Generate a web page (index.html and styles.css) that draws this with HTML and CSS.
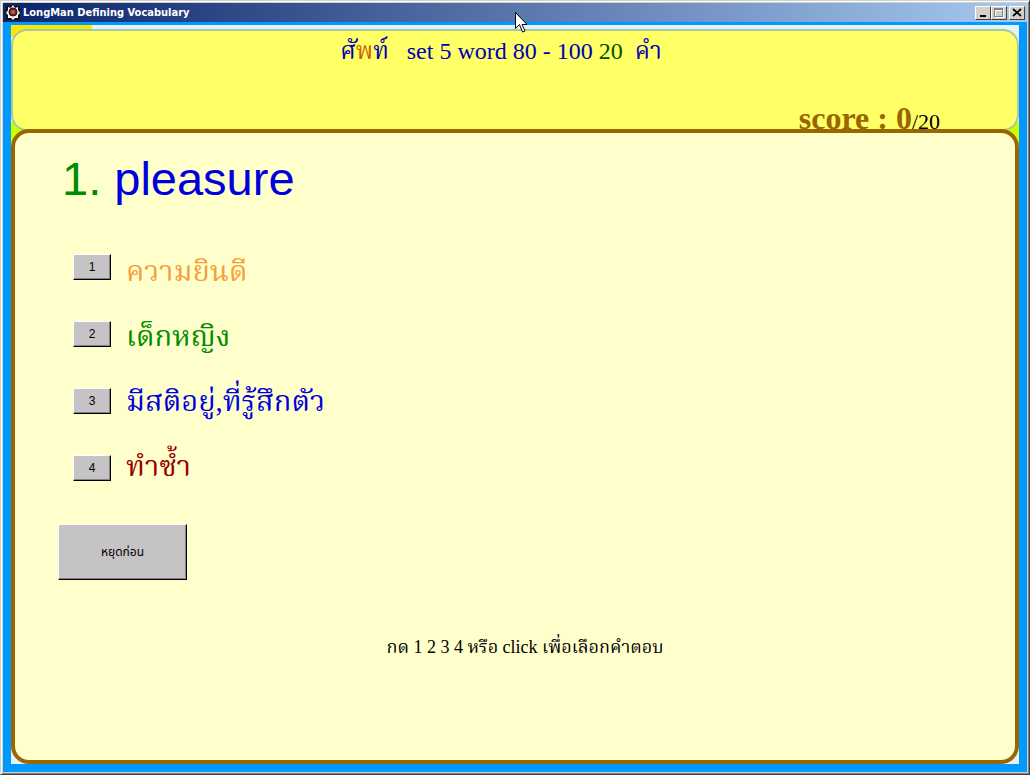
FILE: index.html
```html
<!DOCTYPE html>
<html lang="th">
<head>
  <meta charset="UTF-8" />
  <meta name="viewport" content="width=device-width, initial-scale=1.0" />
  <title>LongMan Defining Vocabulary</title>
  <link rel="stylesheet" href="styles.css">
</head>
<body>

  <div class="window">
    <header class="titlebar">
      <svg class="app-icon" width="14" height="16" viewBox="0 0 14 16">
        <rect x="0" y="1" width="14" height="14" fill="#111" />
        <path d="M7 0 L9 3 L12 2 L12 5 L14 8 L12 10 L12 13 L9 13 L7 15 L5 13 L2 13 L2 10 L0 8 L2 5 L2 2 L5 3 Z" fill="#eee" />
        <circle cx="7" cy="7" r="4" fill="#7a2024" stroke="#2b1010" />
        <circle cx="7" cy="7" r="2" fill="#a86060" />
      </svg>
      <h1>LongMan Defining Vocabulary</h1>
      <div class="window-buttons">
        <button class="win-btn" type="button" aria-label="Minimize">
          <svg width="12" height="10" viewBox="0 0 12 10"><rect x="3" y="7" width="6" height="2" /></svg>
        </button>
        <button class="win-btn" type="button" aria-label="Maximize">
          <svg width="12" height="10" viewBox="0 0 12 10"><path d="M2 1h9v9h-9z M3 3v6h7v-6z" fill="#fff" fill-rule="evenodd" /><path d="M1 0h9v9h-9z M2 2v6h7v-6z" fill="#808080" fill-rule="evenodd" /></svg>
        </button>
        <button class="win-btn close" type="button" aria-label="Close">
          <svg width="12" height="10" viewBox="0 0 12 10"><path d="M2 1l8 7M10 1l-8 7" stroke="#000" stroke-width="1.700" /></svg>
        </button>
      </div>
    </header>

    <div class="stage">
      <section class="top">
        <div class="set-title">ศั<span class="orange">พ</span>ท์ &nbsp; set 5 word 80 - 100 <span class="darkgreen">20</span> &nbsp;คำ</div>
        <div class="score"><strong>score : 0</strong>/20</div>
      </section>

      <main class="quiz">
        <h2 class="question"><span class="number">1.</span> pleasure</h2>

        <div class="choices">
          <div class="keys">
            <button class="btn" id="key1" type="button">1</button>
            <button class="btn" id="key2" type="button">2</button>
            <button class="btn" id="key3" type="button">3</button>
            <button class="btn" id="key4" type="button">4</button>
          </div>
          <div class="answers">
            <label class="a1" for="key1">ความยินดี</label>
            <label class="a2" for="key2">เด็กหญิง</label>
            <label class="a3" for="key3">มีสติอยู่,ที่รู้สึกตัว</label>
            <label class="a4" for="key4">ทำซ้ำ</label>
          </div>
        </div>

        <button class="btn stop" type="button">หยุดก่อน</button>

        <p class="hint">กด 1 2 3 4 หรือ click เพื่อเลือกคำตอบ</p>
      </main>
    </div>
  </div>

  <svg class="cursor" width="12" height="21" viewBox="0 0 12 21">
    <path d="M.5 .5v16l4-4 3 7.500 2.500-1-3-6.500h5z" fill="#fff" stroke="#000" />
  </svg>

</body>
</html>
```
FILE: styles.css
```css
* {
  box-sizing: border-box;
}
body {
  margin: 0;
  font-family: "Liberation Serif", "Noto Serif Thai", "Norasi", "Kinnari", serif;
  background-color: #d4d0c8;
}
.window {
  display: flex;
  flex-direction: column;
  min-height: 100vh;
  padding: 1px;
  border: 1px solid #d4d0c8;
  border-right-color: #404040;
  border-bottom-color: #404040;
  box-shadow: inset 1px 1px #fff, inset -1px -1px #808080;
}
.titlebar {
  display: flex;
  align-items: center;
  gap: 3px;
  height: 19px;
  margin: 1px 1px 0;
  padding: 0 2px 0 3px;
  background: linear-gradient(to right, #0a246a, #a6caf0);
}
.titlebar h1 {
  flex: 1;
  margin: 0;
  color: #fff;
  font: bold 11px "DejaVu Sans Condensed", "Open Sans", sans-serif;
}
.window-buttons {
  display: flex;
}
.win-btn {
  display: flex;
  align-items: center;
  justify-content: center;
  width: 16px;
  height: 14px;
  padding: 0;
  background-color: #d4d0c8;
  border: 1px solid #fff;
  border-right-color: #404040;
  border-bottom-color: #404040;
}
.close {
  margin-left: 2px;
}
.stage {
  flex: 1;
  display: flex;
  flex-direction: column;
  margin: 0 1px 1px;
  padding: 3px 8px 8px;
  background: linear-gradient(#ffe600, #ffe600) 8px 3px / 81px 12px no-repeat,
    linear-gradient(#ccff00, #ccff00) 8px 100px / calc(100% - 16px) 24px no-repeat,
    linear-gradient(#e6f2f5, #e6f2f5) content-box,
    #0099ff;
}
.top {
  height: 102px;
  margin-top: 4px;
  padding: 4px 77px 0 0;
  background-color: #ffff66;
  border: 2px solid #a4c8a8;
  border-radius: 16px;
}
.set-title {
  padding-left: 49px;
  color: #0000b4;
  font-size: 24px;
  line-height: 32px;
  text-align: center;
}
.orange {
  color: #cc6600;
}
.darkgreen {
  color: #005000;
}
.score {
  margin-top: 31px;
  color: #000;
  font-size: 22px;
  line-height: 40px;
  text-align: right;
}
.score strong {
  color: #996600;
  font-size: 32px;
}
.quiz {
  flex: 1;
  margin-top: -2px;
  padding: 16px 43px;
  background-color: #ffffcc;
  border: 4px solid #996600;
  border-radius: 18px;
}
.question {
  margin: 0;
  padding-left: 4px;
  color: #0000dc;
  font: 47px/60px "Liberation Sans", sans-serif;
}
.number {
  color: #008c00;
}
.choices {
  display: flex;
  gap: 15px;
  padding: 28px 15px 0;
}
.keys {
  display: flex;
  flex-direction: column;
  gap: 41px;
  padding-top: 17px;
}
.btn {
  width: 38px;
  height: 26px;
  padding: 0;
  color: #000;
  background-color: #c6c3c6;
  border: 1px solid #fff;
  border-right-color: #000;
  border-bottom-color: #000;
  box-shadow: inset -1px -1px #848284;
  font: 12px "Liberation Sans", "Noto Sans Thai", "Loma", sans-serif;
}
.answers {
  padding-top: 2px;
  font-size: 29px;
  line-height: 65px;
}
.answers label {
  display: block;
}
.a1 {
  color: #f5a03c;
}
.a2 {
  color: #008c00;
}
.a3 {
  color: #0000dc;
}
.a4 {
  color: #960000;
}
.stop {
  display: block;
  width: 129px;
  height: 56px;
  margin-top: 25px;
}
.hint {
  margin: 54px 0 0;
  padding-left: 20px;
  color: #000;
  font-size: 18px;
  line-height: 26px;
  text-align: center;
}
.cursor {
  position: absolute;
  top: 12px;
  left: 50%;
}
```
